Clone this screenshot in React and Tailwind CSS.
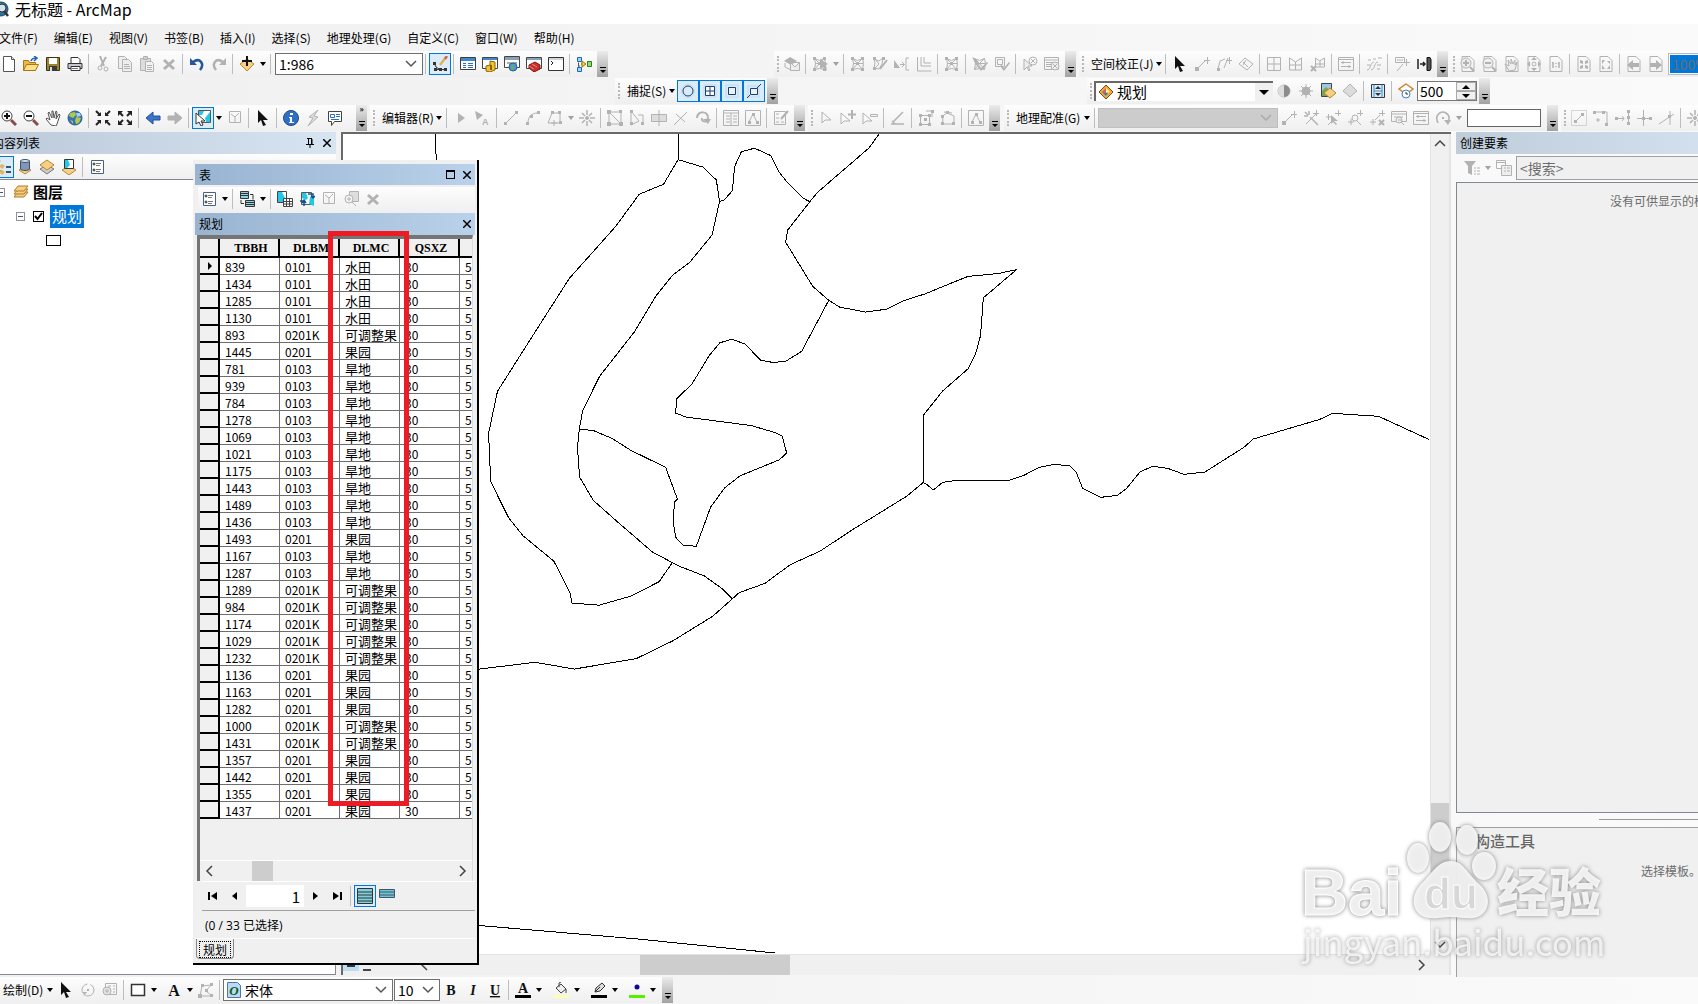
import { useState } from 'react'

const p = (d, fill = 'none', stroke = 'currentColor', w = 1) => <path d={d} fill={fill} stroke={stroke} strokeWidth={w} />
const f = (d, fill = 'currentColor') => <path d={d} fill={fill} stroke="none" />

const cursor = 'M3 0v13l3-3 2 6 3-1-3-5h5z'
const page = 'M2 .5h8l4 4v11H2z'
const mesh = 'M2.500 2.500l5 2 5-2 1 5-1 6-5-1-5 1 1-6zM2.500 2.500l5 5 5-5M7.500 7.500l-5 6M7.500 7.500l5 6M3 7.500h10'
const nodes = 'M1 1h3v3H1zM11 1h3v3h-3zM1 12h3v3H1zM11 12h3v3h-3zM6 6h3v3H6z'
const plus = 'M10 4.500h6M13.500 1v7'

const icons = {
  new: <>{p('M2.500.5h8l3 3v12h-11z', '#fff', '#555')}{p('M10.500.5v3h3', '#dde8f5', '#555')}</>,
  open: <>{p('M.5 14.500v-10h5l1 2h6v8z', '#e8b84c', '#a87718')}{p('M.5 14.500l3-6h12l-3 6z', '#ffdf8a', '#a87718')}{p('M8 5c1-3 3-3 5-3M11 0l3 2-3 3', 'none', '#2b62ad', 1.500)}</>,
  save: <>{p('M1.500 1.500h13v13h-13z', '#9a8432', '#3c3514')}{f('M4 2h8v6H4z', '#fff')}{f('M4 10h8v5H4z', '#3a3a3a')}{f('M5 11h2v4H5z', '#ddd')}</>,
  print: <>{p('M4 1.500h7l2 2v5H4z', '#fff', '#333')}{p('M1 7.500h14v5H1z', '#c5c9ce', '#333')}{p('M4 10.500h9v4H4z', '#fff', '#333')}{f('M5 12h6v1H5z', '#777')}</>,
  cut: <>{p('M5 0l4 10M11 1L6 10', 'none', 'currentColor', 2)}<circle cx="5" cy="12" r="2" /><circle cx="11" cy="13" r="2" /></>,
  copy: <>{p('M1.500.5h6l3 3v9h-9z', '#eee')}{p('M5.500 3.500h6l3 3v9h-9z', '#eee')}{p('M7 8.500h5M7 10.500h6M7 12.500h6')}</>,
  paste: <>{p('M1.500 2.500h10v12h-10z', '#ddd')}{p('M4.500.5h4v3h-4z', '#ccc')}{p('M6.500 5.500h6l2 2v8h-8z', '#f3f3f3')}{p('M8 9.500h5M8 11.500h5M8 13.500h5')}</>,
  del: p('M3 4l10 9M13 4L3 13', 'none', 'currentColor', 3),
  undo: <>{p('M4 6c7-5 12 2 7 8', 'none', '#26579b', 2.500)}{f('M1 2v7h7z', '#26579b')}</>,
  redo: <>{p('M12 6C5 1 0 8 5 14', 'none', 'currentColor', 2.500)}{f('M15 2v7H8z')}</>,
  add: <>{p('M8 3l7 5-7 7-7-7z', '#f6cf82', '#b98736')}{p('M8 0v10M3 5h10', 'none', '#111', 2)}</>,
  editor: <>{p('M3 9l1 2 3 2M3 13.500h11', 'none', '#333')}{f('M1 6h3v3H1zM2 12h3v3H2zM7 12h3v3H7zM12 12h3v3h-3z', '#333')}{p('M14 1L8 9', 'none', '#e0b35a', 2.500)}{p('M15 0l-2 3', 'none', '#c66', 2.500)}</>,
  toc: <>{p('M.5 1.500h15v12H.5z', '#fff', '#3c3c3c')}{f('M1 2h14v3H1z', '#3f87cf')}{p('M3 7.500h3M3 9.500h3M3 11.500h3M8 7.500h5M8 9.500h5M8 11.500h5', 'none', '#2c6fc0')}</>,
  catalog: <>{p('M.5 1.500h15v11H.5z', '#fff', '#444')}{f('M1 2h14v2H1z', '#3f87cf')}{p('M4 10l4-1V5l5 1v8l-5 2-4-1z', '#f1c232', '#8a6400')}{f('M8 9h2v5H8z', '#806000')}</>,
  search: <>{p('M.5.5h15v11H.5z', '#fff', '#444')}{f('M1 1h14v3H1z', '#8ba0b5')}{f('M3 6h10v2H3z', '#aaa')}<circle cx="9" cy="11" r="4" fill="#4b9bd0" stroke="#28628c" />{f('M7 10h3v3H8z', '#6ab04c')}</>,
  toolbox: <>{p('M.5 1.500h15v11H.5z', '#fff', '#444')}{f('M1 2h14v2H1z', '#8ba0b5')}{p('M3 9l6-3 5 3v4l-6 3-5-4z', '#c9302c', '#7d1512')}{p('M6 8l5 3M3 10l5 3', 'none', '#e88')}</>,
  python: <>{p('M.5 1.500h15v13H.5z', '#fff', '#333')}{f('M1 2h14v2H1z', '#cfd6de')}{p('M3 5l2 2-2 2', 'none', '#222')}</>,
  model: <>{p('M3 2v4M3 9v4M5 8h3M11 8h3', 'none', '#555')}{p('M1.500 1.500h4v4h-4zM1.500 11.500h4v4h-4z', '#9cd3ff', '#1e69b8')}{p('M2.500 6.500v4', 'none', '#555')}{p('M6 5l4 3-4 3z', '#ffd54a', '#9b7200')}{p('M11.500 5.500h4v5h-4z', '#8fdc6e', '#2f7c1d')}</>,
  zoomIn: <><circle cx="6" cy="6" r="5" fill="#fff" stroke="#444" />{p('M6 3v6M3 6h6', 'none', '#111', 2)}{p('M10 10l5 5', 'none', '#8a4b4b', 3)}</>,
  zoomOut: <><circle cx="6" cy="6" r="5" fill="#fff" stroke="#444" />{p('M3 6h6', 'none', '#111', 2)}{p('M10 10l5 5', 'none', '#8a4b4b', 3)}</>,
  pan: p('M6 15L1 9l1-1 3 2-2-7 1-1 3 6V1h1l1 7 2-7 1 1-1 7 3-5 1 1-3 9-1 2z', '#fff', '#555'),
  globe: <><circle cx="8" cy="8" r="7" fill="#3572b8" stroke="#2c5c90" />{f('M3 3l5-1 1 3-3 3-4-2zM9 7l5 1-2 5-3 1-1-3zM3 10l3 1v3z', '#b4c94b')}{f('M9 3h4l1 3-4 1z', '#a5d0f0')}</>,
  app: <><circle cx="8" cy="8" r="7" fill="#2c6f9c" stroke="#1f4a6e" />{f('M3 3l5-1 1 3-3 3-4-2z', '#58a060')}<circle cx="9" cy="7" r="4" fill="#cfe6ef" stroke="#333" />{p('M11 10l4 5', 'none', '#333', 2.500)}</>,
  fixedIn: <>{p('M1 1l4 4M15 1l-4 4M1 15l4-4M15 15l-4-4', 'none', 'currentColor', 2)}{f('M6 2v4H2zM10 2v4h4zM6 14v-4H2zM10 14v-4h4z')}</>,
  fixedOut: <>{p('M2 2l4 4M14 2l-4 4M2 14l4-4M14 14l-4-4', 'none', 'currentColor', 2)}{f('M1 1h5L1 6zM15 1h-5l5 5zM1 15h5l-5-5zM15 15h-5l5-5z')}</>,
  back: p('M1 8l7-6v4h7v4H8v4z', '#3c74c9', '#1f4f9c'),
  forward: p('M15 8L8 2v4H1v4h7v4z', 'currentColor'),
  selFeat: <>{p('M3.500.5h12v12h-12z', '#fff', '#555')}{f('M4 1h5l-2 4H4zM10 8l5-6v10h-4z', '#22c7e8')}{p('M1 3v11l3-2 2 4 2-1-2-4h4z', '#fff', '#333')}</>,
  clearSel: <>{p('M2.500 1.500h11v11h-11zM4 4l4 3 4-4M8 7v5')}</>,
  cursor: f(cursor, '#111'),
  identify: <><circle cx="8" cy="8" r="7.500" fill="#2f6fc2" stroke="#1b458a" />{f('M7 3h3v2H7zM6 7h3v5h2v1H6v-1h1V8H6z', '#fff')}</>,
  bolt: p('M13 0L4 7l4 1-5 8 10-9-4-1z', '#ddd'),
  popup: <>{p('M1.500 1.500h13v10h-7l-3 4v-4h-3z', '#fff', '#444')}{p('M3.500 4.500h4v3h-4zM9 4.500h4M9 6.500h4M4 9.500h8', 'none', '#2c6fc0')}</>,
  drawOrder: <>{p('M3 2v3l5 3M3 5v5l5 3', 'none', '#999')}{f('M0 2l3-2 3 2-3 3zM4 7l3-2 3 2-3 3zM4 13l3-2 3 2-3 3z', '#e2b55e')}{p('M11 8h5M11 13h5', 'none', '#357', 2)}</>,
  source: <>{p('M8 8l6 3-6 4-6-4z', '#f6cf82', '#b98736')}{p('M3.500 2v8c1 2 8 2 9 0V2z', '#8096b8', '#40506c')}<ellipse cx="8" cy="2" rx="4.500" ry="1.500" fill="#d8e2f0" stroke="#40506c" /></>,
  visible: <>{p('M8 6l7 4-7 5-7-5z', '#ccc', '#777')}{p('M8 1l7 5-7 5-7-5z', '#f6cf82', '#b98736')}</>,
  selection: <>{p('M8 7l7 4-7 5-7-5z', '#f6cf82', '#b98736')}{p('M3.500.5h9v9h-9z', '#fff', '#333')}{f('M4 1h3l2 5-3 3H4z', '#22c7e8')}</>,
  options: <>{p('M2.500 1.500h12v13h-12z', '#fff', '#46607f')}{p('M7 4.500h5M7 6.500h4M7 10.500h5M7 12.500h4', 'none', '#777')}<circle cx="5" cy="5" r="1" stroke="#222" /><circle cx="5" cy="11" r="1" stroke="#222" /></>,
  related: <>{p('M1.500.5h8v7h-8z', '#8bd3e0', '#333')}{p('M2 2.500h7M2 4.500h7', 'none', '#333')}{p('M6.500 9.500h9v6h-9z', '#8bd3e0', '#333')}{p('M7 11.500h8M7 13.500h8M11 3.500h3v5M5 12.500H2V9', 'none', '#333')}</>,
  selTable: <>{p('M.5.5h9v11h-9z', '#fff', '#444')}{f('M1 1h4l3 6-2 4H1z', '#22c7e8')}{p('M6.500 7.500h9v8h-9zM6 10.500h9M6 13h9M9.500 8v8M12.500 8v8', '#fff', '#444')}</>,
  switchSel: <>{p('M2.500 1.500h10v12h-10z', '#fff', '#555')}{f('M3 2h4l2 5-2 2-4-2zM11 6h4v9l-5-2z', '#22c7e8')}{p('M9 3h5v4M1 10h4v5M12 5l2 2 2-2M3 12l2-3 2 3', 'none', '#14508f', 1.500)}</>,
  zoomSel: <>{p('M6.500.5h9v10h-9z', '#ddd')}<circle cx="6" cy="8" r="4" fill="#f4f4f4" />{p('M4 8h4M6 6v4M9 11l4 4')}</>,
  layerTopo: <>{f('M0 5l6-4 7 4-6 4z')}{p('M1 7v4l6 3')}{p('M6.500 6.500h9v8h-9zM7 7l4 4 4-4', '#eee')}</>,
  meshCur: <>{p(mesh)}{f(nodes)}{f('M8 3v10l3-2 4 4-1-6 2-1z')}</>,
  mesh: <>{p(mesh)}{f(nodes)}</>,
  meshPen: <>{p('M2 3l5 2 4-3-1 6-3 5-5-1 1-5zM3 3l4 5-4 4')}{f('M1 1h3v3H1zM10 1h3v3h-3zM1 11h3v3H1z')}{p('M15 4l-7 9', 'none', 'currentColor', 2)}</>,
  extend: <>{f('M0 4l6 8H0z')}{p('M6 8.500h4M8 6l2.500 2.500L8 11M15 2h-3v12h3')}</>,
  corner: <>{p('M1.500 1v14h14M5 1v9h10', 'none', 'currentColor', 1)}{p('M8 1v6h7', 'none')}</>,
  check1: <>{p(mesh)}{f('M0 1l5 3 2 6-3-1zM5 10l4 5 7-8-1-1-6 6-2-3z')}</>,
  check2: <>{p('M1.500 1.500h9v9h-9zM3.500 3.500h5v5h-5z')}{f('M6 10l4 5 6-8-1-1-5 6-2-3z')}</>,
  errPick: <>{p('M2 3v11l3-3 2 4 1-1-2-4h4z', '#eee')}<circle cx="11" cy="5" r="4" />{p('M9 3l4 4M13 3L9 7')}</>,
  errTable: <>{p('M.5 1.500h14v12H.5zM0 4h14M2 6.500h7M2 8.500h6M2 10.500h5')}<circle cx="11" cy="10" r="4" fill="#eee" />{p('M9 8l4 4M13 8l-4 4')}</>,
  link: <>{p('M3 13l8-8')}{f('M1 11h4v4H1z')}{p(plus)}</>,
  linkCurve: <>{p('M2 13L4 5l5-2M12 2l-4 10')}{f('M1 12h3v3H1z')}{p(plus)}</>,
  rotRect: <>{p('M7 2l8 6-6 6-8-6zM5 6l5 5M8 4L5 9')}</>,
  grid4: p('M1.500 1.500h13v13h-13zM8 2v13M2 8h13'),
  gridBend: p('M1.500 2l6 4 6-4v12h-12zM7.500 6v8M2 9h12'),
  gridX: <>{p('M5.500 2l4 3 5-3v9h-9zM10 5v6M6 8h8')}{p('M1 10l5 5M6 10l-5 5', 'none', 'currentColor', 2)}</>,
  linkTable: <>{p('M.5 1.500h15v13H.5zM1 3.500h14M3 6.500h10M3 10.500h10M5 5v3M11 9v3')}</>,
  edge: p('M1 14c4 0 3-8 7-8M5 14c4 0 3-8 7-8M2 4h3M7 3h3M12 2h4M1 9h3M11 9h4M11 13h3'),
  attrXfer: <>{p('M1.500 1.500h9v5h-9zM3 4h6M3 15l6-7')}{p('M9 6.500h7M12.500 3v7')}</>,
  transfer: <>{p('M2 3v10M4 8h5M7 6l2 2-2 2', 'none', '#222', 1.500)}{p('M11 1.500h3l1 2v9l-1 2h-3z', '#555', '#111')}</>,
  pZoomIn: <>{p(page)}<circle cx="6" cy="7" r="5" fill="#eee" />{p('M3 7h6M6 4v6M10 11l4 4', 'none', 'currentColor', 2)}</>,
  pZoomOut: <>{p(page)}<circle cx="6" cy="7" r="5" fill="#eee" />{p('M3 7h6M10 11l4 4', 'none', 'currentColor', 2)}</>,
  pPan: <>{p(page)}{p('M5 15L1 8l4 2-1-6 3 4V3l2 5 2-4v5l2-3-2 8z', '#eee')}</>,
  pFull: <>{p(page)}{f('M8 1l3 3H5zM8 15l3-3H5zM1 8l3-3v6zM15 8l-3-3v6z')}<circle cx="8" cy="8" r="2" /></>,
  pOne: <>{p(page)}{p('M5 6v6M11 6v6M8 7v1M8 10v1M4 7h1M10 7h1', 'none', 'currentColor', 1.500)}</>,
  pIn: <>{p(page)}{f('M4 4l3 1v3L4 7zM12 4L9 5v3l3-1zM4 13l3-1V9l-3 1zM12 13l-3-1V9l3 1z')}</>,
  pOut: <>{p(page)}{f('M4 4h3L4 8zM12 5H9l3 3zM4 13h3l-3-4zM12 13H9l3-4z')}</>,
  pBack: <>{p(page)}{f('M1 9l6-5v3h6v4H7v3z')}</>,
  pFwd: <>{p(page)}{f('M14 9L8 4v3H2v4h6v3z')}</>,
  contrast: <><circle cx="8" cy="8" r="6" />{f('M8 2a6 6 0 0 0 0 12z', '#ddd')}{f('M8 2a6 6 0 0 1 0 12z', '#8c8c8c')}</>,
  sun: <><circle cx="8" cy="8" r="4" fill="currentColor" />{p('M8 1v14M1 8h14M3 3l10 10M13 3L3 13')}</>,
  transp: <>{p('M1.500.5h10v13h-10z', '#9cc7e6', '#444')}{f('M2 8l4-4 6 5v4H2z', '#7aa54a')}{p('M10 5l6 5-6 5-6-5z', '#f6cf82', '#b98736')}</>,
  swipe: p('M8 1l7 7-7 6-7-6z', '#dcdcdc'),
  fit: <>{p('M1.500 1.500h13v13h-13z', '#d9ecfa', '#333')}{p('M4 1.500v13M12 1.500v13M4 8h8', 'none', '#3c8ac9')}{f('M8 3l3 3H5zM8 13l3-3H5z', '#333')}</>,
  flicker: <>{p('M8 1l7 5-7 5-7-5z', '#fff', '#c88a35', 1.500)}<circle cx="8" cy="11" r="4" fill="#fff" stroke="#3b82c4" />{p('M8 9v2h2', 'none', '#333')}</>,
  tri: f('M5 3l7 5-7 5z'),
  triA: <>{f('M0 1l8 4-6 5z')}<text x="7" y="15" fontSize="9" fontWeight="bold" fill="currentColor" stroke="none" fontFamily="Liberation Sans, sans-serif">A</text></>,
  line: <>{p('M3 13L13 3')}{f('M1 12h3v3H1zM12 1h3v3h-3z')}</>,
  arc: <>{p('M3 13c0-6 3-10 10-10')}{f('M1 12h3v3H1zM12 1h3v3h-3zM5 5h3v3H5z')}</>,
  trace: <>{p('M1 13L5 3h8v10zM7 10v6M4 13h6')}{f('M12 11h3v3h-3zM11 1h3v3h-3zM4 1h3v3H4z')}</>,
  point: <>{p('M8 0v5M8 11v5M0 8h5M11 8h5M3 3l3 3M13 3l-3 3M3 13l3-3M13 13l-3-3', 'none', 'currentColor', 1.500)}<circle cx="8" cy="8" r="1.500" fill="currentColor" /></>,
  vertices: <>{p('M2 2v12h12zM14 2v12', 'none')}{p('M2 2h12', 'none')}{f('M0 0h4v4H0zM12 0h3v3h-3zM0 12h4v4H0zM12 12h4v4h-4z')}</>,
  reshape: <>{p('M2 1v14l8-4zM9 5h5v9')}{f('M1 0h3v3H1zM1 12h3v3H1zM12 12h3v3h-3z')}</>,
  cutPoly: <>{p('M.5 4.500h15v7H.5z', '#ddd')}{p('M8 0v16')}</>,
  split: <>{p('M1 15L14 2M3 4l9 8')}</>,
  rotate: <>{p('M2 8c0-8 12-7 11 0-1 5-7 4-6 0', 'none', 'currentColor', 2)}{f('M8 9h8l-3 5z')}</>,
  attrs: <>{p('M.5.5h15v15H.5zM1 3h14M8 3v12M3 6h4M3 9h4M3 12h4M10 6h4M10 9h4M10 12h4')}</>,
  sketch: <>{p('M.5.5h15v15H.5zM4 12l4-8 4 8')}{f('M3 11h3v3H3zM7 3h3v3H7zM11 11h3v3h-3z')}</>,
  create: <>{p('M1.500 1.500h11v13h-11zM3 4h3M3 8h3M3 12h3M8 12h3')}{p('M15 1L8 9', 'none', 'currentColor', 2)}</>,
  arrow: p('M4 2v11l3-3h6z', '#f8f8f8'),
  arrowPlus: <>{p('M1 3v11l3-3h6z', '#f8f8f8')}{p('M12 0v9M8 4.500h8', 'none', 'currentColor', 2)}</>,
  arrowMinus: <>{p('M1 3v11l3-3h6z', '#f8f8f8')}{p('M8.500 4.500h7v2h-7z')}</>,
  angle: p('M1 14h13M3 12l10-10M2 11l3 3', 'none', 'currentColor', 1.500),
  nodeBox: <>{p('M2.500 5.500h9v9h-9zM8 1h6v6')}{f('M1 4h3v3H1zM10 4h3v3h-3zM1 13h3v3H1zM10 13h3v3h-3zM6 8h3v3H6zM13 0h3v3h-3z')}</>,
  nodeMove: <>{p('M2.500 6L7 3l7 3v8h-11z')}{p('M4 2l8 1')}{f('M1 5h3v3H1zM6 1h3v3H6zM12 12h3v3h-3zM1 12h3v3H1z')}</>,
  linkAuto: <>{p('M2 2l3 3M6 1v4M1 6h4M7 7l8 8', 'none', 'currentColor', 1.500)}{p('M3 14L14 3M10 3.500h6M13.500 0v6')}</>,
  linkSel: <>{p('M1 7h5M3.500 4v6M10 3.500h6M13.500 0v6M3 15l4-4')}{f('M6 5v9l2-2 3 3 1-1-3-3h4z')}</>,
  linkZoom: <>{p('M1 12h6M4 9v6M10 3.500h6M13.500 0v6M10 11l4 4')}<circle cx="8" cy="8" r="3" /></>,
  linkDel: <>{p('M1 12h6M4 9v6M10 3.500h6M13.500 0v6M6 10l5-5')}{p('M10 10l5 5M15 10l-5 5', 'none', 'currentColor', 2)}</>,
  viewer: <>{p('M.5 1.500h15v10H.5zM1 4h14M3 7h9')}<circle cx="8" cy="10" r="3" fill="#eee" />{p('M10 12l3 3M7 10h3')}</>,
  rotSm: <>{p('M3 13C-1 5 6 0 11 3s3 8 1 10', 'none', 'currentColor', 1.500)}{f('M9 10h7l-3 5zM7 7h2v2H7z')}</>,
  snapBox: <><path d="M.5.5h15v15H.5z" strokeDasharray="1 1" />{p('M4 12l8-8')}{f('M3 10h3v3H3zM10 3h3v3h-3z')}</>,
  tangent: <>{p('M1 2h13v13')}{p('M3 10h4M5 8v4')}{f('M0 1h3v3H0zM12 13h3v3h-3zM9 1h3v3H9z')}</>,
  snapExt: <>{p('M1 8.500h8M7 6l2 2.500L7 11M13.500 1v14')}{f('M12 0h3v3h-3zM12 12h3v3h-3zM0 7h3v3H0zM12 6h3v3h-3z')}</>,
  snapInt: <>{p('M0 8.500h15M6.500 0v16')}{f('M5 7h3v3H5zM12 7h3v3h-3z')}</>,
  snapLine: <>{p('M0 14L15 4M11 1v14')}{f('M9 5h3v3H9z')}</>,
  filter: <>{f('M0 1h12L8 6v9l-4-2V6z')}{p('M10 8h2M10 11h2M10 14h2M13 8h3M13 11h3M13 14h3')}</>,
  organize: <>{p('M.5.5h9v8h-9zM1 2.500h8')}{p('M5.500 5.500h10v10h-10zM8 8h2M8 11h2M11 8h3M11 11h3', '#eee')}</>,
  rotDraw: <><circle cx="8" cy="8" r="6" strokeDasharray="12 3" />{f('M7 7h2v2H7zM3 10h4l-3 4z')}</>,
  boxZoom: <>{p('M3.500 1.500h11v11h-11zM6 4h3M6 7h3M11 4h2M11 7h2M11 10h2')}<circle cx="5" cy="9" r="4" fill="#e4e4e4" />{p('M3 9h4M5 7v4')}</>,
  rect: p('M1.500 2.500h13v11h-13z', '#fff', '#333', 1.500),
  editVert: <>{p('M2 14L4 4l9-1-5 6 6 5z')}{f('M0 12h4v4H0zM3 2h3v3H3zM12 1h3v3h-3zM7 7h3v3H7zM12 12h3v3h-3z')}</>,
  bucket: <>{p('M3 6l5-4 5 5-5 4z', '#eee', '#444')}{p('M6 5V1l2-1M13 7v4', 'none', '#444')}{f('M0 13h16v3H0z', '#ffffb4')}</>,
  pen: <>{p('M4 10l1-4 6-5 3 3-5 5zM4 10l5-5', '#ddd', '#333')}{f('M0 13h16v3H0z', '#000')}</>,
  marker: <><circle cx="8" cy="5" r="2.500" fill="#0a0a8c" stroke="none" />{f('M0 13h16v3H0z', '#58f000')}</>,
  fontCol: <><text x="8" y="11" textAnchor="middle" fontSize="14" fontWeight="bold" fill="#111" stroke="none" fontFamily="Liberation Serif, serif">A</text>{f('M0 13h16v3H0z', '#000')}</>,
  letterA: <text x="8" y="14" textAnchor="middle" fontSize="16" fontWeight="bold" fill="#111" stroke="none" fontFamily="Liberation Serif, serif">A</text>,
  bold: <text x="8" y="13" textAnchor="middle" fontSize="14" fontWeight="bold" fill="#111" stroke="none" fontFamily="Liberation Serif, serif">B</text>,
  italic: <text x="8" y="13" textAnchor="middle" fontSize="14" fontWeight="bold" fontStyle="italic" fill="#111" stroke="none" fontFamily="Liberation Serif, serif">I</text>,
  underline: <text x="8" y="13" textAnchor="middle" fontSize="14" fontWeight="bold" textDecoration="underline" fill="#111" stroke="none" fontFamily="Liberation Serif, serif">U</text>,
  snapPoint: <><circle cx="8" cy="8" r="6.500" stroke="#b9dcf7" /><circle cx="8" cy="8" r="5" stroke="#1c3f6e" /></>,
  snapEnd: <>{p('M2 2h12v12H2z', 'none', '#b9dcf7')}{p('M3.500 3.500h9v9h-9zM8 4v9M4 8h9', '#fff', '#1c3f6e')}</>,
  snapVertex: <>{p('M2 2h12v12H2z', 'none', '#b9dcf7')}{p('M4.500 4.500h7v7h-7z', '#e8f3fc', '#1c3f6e')}</>,
  snapEdge: <>{p('M2 3h11v11H2z', 'none', '#b9dcf7')}{p('M4.500 5.500h7v6h-7zM1 15l3-3M11 5l4-4', '#e8f3fc', '#1c3f6e')}</>,
  first: f('M3 4h2v8H3zM12 4v8L6 8z', '#000'),
  prev: f('M10 4v8L5 8z', '#000'),
  next: f('M6 4v8l5-4z', '#000'),
  last: f('M11 4h2v8h-2zM4 4v8l6-4z', '#000'),
  allRecs: p('M.5.5h15v15H.5zM1 4h14M1 7h14M1 10h14M1 13h14', '#7fd0de', '#333'),
  selRecs: p('M.5 1.500h15v8H.5zM1 4h14M1 7h14', '#6cc6d8', '#456'),
  layer: <>{p('M8 1l7 7-7 7-7-7z', '#f0a93c', '#7a4a10')}{f('M8 4l4 4-4 1z', '#fff38a')}{f('M4 8l4 4 2-3z', '#2d7bc5')}{f('M8 4L4 8l4 1z', '#e55')}</>,
  stack: <>{[9, 6, 3].map((y) => <path key={y} d={`M1 ${y + 4}l4-5h10l-4 5z`} fill="#f5cf85" stroke="#b07c26" />)}</>,
  fontPage: <>{p('M1.500.5h10l3 3v12h-13z', '#bcd9f2', '#4b78a8')}<text x="8" y="13" textAnchor="middle" fontSize="13" fontWeight="bold" fontStyle="italic" fill="#0b5c1c" stroke="none" fontFamily="Liberation Serif, serif">O</text></>,
}

function Icon({ name }) {
  return (
    <svg viewBox="0 0 16 16" className="h-4 w-4 shrink-0" fill="none" stroke="currentColor" aria-hidden="true">
      {icons[name]}
    </svg>
  )
}

// '|' separator, 'v' drop arrow, '-' prefix disabled, '*' prefix pressed
function Items({ list }) {
  return list.split(' ').map((it, i) => {
    if (it === '|') return <span key={i} className="mx-[2px] h-5 w-[2px] shrink-0 border-l border-[#bdbdbd]" />
    const off = it[0] === '-'
    const on = it[0] === '*'
    const name = off || on ? it.slice(1) : it
    if (name === 'v') return <Drop key={i} off={off} />
    return (
      <button
        key={i}
        aria-label={name}
        disabled={off}
        className={
          'flex h-[22px] w-[22px] shrink-0 items-center justify-center ' +
          (on ? 'border border-[#0078d7] bg-[#dcebf8]' : off ? 'text-[#b2b2b2]' : 'text-[#222] hover:bg-[#dcebf8]')
        }
      >
        <Icon name={name} />
      </button>
    )
  })
}

function Drop({ off }) {
  return (
    <span className="flex w-[10px] shrink-0 justify-center">
      <span className={'border-x-[3px] border-t-[4px] border-x-transparent ' + (off ? 'border-t-[#a0a0a0]' : 'border-t-black')} />
    </span>
  )
}

function Overflow({ double }) {
  return (
    <button aria-label="more" className="flex h-[26px] w-[11px] shrink-0 flex-col items-center justify-end bg-linear-to-b from-[#ececec] to-[#a2a2a2] pb-1">
      {double && <span className="mb-2 text-[8px] leading-[8px] font-bold">»</span>}
      <span className="h-px w-[6px] bg-black" />
      <span className="mt-[2px] border-x-[3px] border-t-[3px] border-x-transparent border-t-black" />
    </button>
  )
}

function Grip() {
  return <span className="ml-[3px] mr-[2px] h-4 w-[2px] shrink-0 border-l-2 border-dotted border-[#b8b8b8]" />
}

function Bar({ className = '', grip = true, over = 'ml-[2px]', double, children }) {
  return (
    <div className={'flex h-[26px] shrink-0 items-center bg-linear-to-b from-[#fdfdfd] to-[#efefef] ' + className}>
      {grip && <Grip />}
      {children}
      {over && <span className={over}><Overflow double={double} /></span>}
    </div>
  )
}

function Chevron({ dir = 'down', className = '' }) {
  const d = { down: 'M1 3l5 5 5-5', up: 'M1 8l5-5 5 5', left: 'M8 1L3 6l5 5', right: 'M4 1l5 5-5 5' }[dir]
  return (
    <svg viewBox="0 0 12 12" className={'h-3 w-3 ' + className} fill="none" stroke="currentColor" strokeWidth="1.500" aria-hidden="true">
      <path d={d} />
    </svg>
  )
}

function Combo({ label, value, className, icon, disabled, solid }) {
  return (
    <div className={'relative flex shrink-0 items-center ' + className}>
      {icon && <span className="pl-[2px]"><Icon name={icon} /></span>}
      <select aria-label={label} disabled={disabled} defaultValue={value} className="h-full min-w-0 flex-1 appearance-none bg-transparent px-[3px] focus:outline-none">
        <option>{value}</option>
      </select>
      {solid ? (
        <span className="pointer-events-none flex h-full w-[18px] items-center justify-center bg-[#f0f0f0]">
          <span className="border-x-[5px] border-t-[5px] border-x-transparent border-t-black" />
        </span>
      ) : (
        <span className={'pointer-events-none mr-[5px] ' + (disabled ? 'text-[#aaa]' : 'text-[#555]')}><Chevron /></span>
      )}
    </div>
  )
}

function Label({ text, className }) {
  return (
    <button className={'flex shrink-0 items-center whitespace-nowrap ' + className}>
      <span className="flex-1 text-left">{text}</span>
      <Drop />
    </button>
  )
}

const menus = ['文件(F)', '编辑(E)', '视图(V)', '书签(B)', '插入(I)', '选择(S)', '地理处理(G)', '自定义(C)', '窗口(W)', '帮助(H)']

const kinds = { w: ['0101', '水田'], k: ['0201K', '可调整果'], g: ['0201', '果园'], h: ['0103', '旱地'] }
const rows = (
  '839w 1434w 1285w 1130w 893k 1445g 781h 939h 784h 1278h 1069h 1021h 1175h 1443h 1489h 1436h 1493g 1167h 1287h ' +
  '1289k 984k 1174k 1029k 1232k 1136g 1163g 1282g 1000k 1431k 1357g 1442g 1355g 1437g'
).split(' ').map((s) => [s.slice(0, -1), ...kinds[s.slice(-1)], '30', '5'])

// parcel boundaries, digitised at 2.8x (west) and 3x (east)
const west = [
  '555,0 555,83 514,152 446,180 380,270 250,416 130,604 49,732 24,850 30,985 80,1086 121,1137 207,1208 253,1298 257,1325 334,1331 422,1306 502,1265 538,1213',
  '555,83 625,104 662,140 671,200 650,294 588,370 540,406 492,466 432,566 335,690 288,785 278,838 273,890 279,972 317,1037 390,1102 483,1182 556,1221 628,1249 676,1283 707,1313',
  '671,200 684,196 707,170 713,103 732,61 769,51 815,72 838,118 860,146 907,192 924,201',
  '1120,8 1090,50 945,175 924,201 862,280 856,314 932,438 977,477 1007,496 1080,510 1138,502 1187,478 1247,459 1310,433 1367,410 1452,402 1503,391 1410,470 1402,576 1388,628 1368,668 1296,731 1242,799 1242,987 1195,1026 1046,1118 952,1180 870,1217 798,1270 726,1296 707,1313 652,1362 540,1431 437,1481 264,1510 155,1491 -10,1511',
  '977,477 901,620 856,648 820,651 786,645 743,600 706,586 672,596 642,632 594,711 551,753 548,793 577,804 760,828 828,848 847,858 859,905 838,924 728,969 686,1002 646,1056 606,1166 570,1163 548,1141 541,1095 545,1042 553,1034 520,945 422,897 370,864 318,842 278,838',
]
const east = '10,278 21,284 40,300 68,277 110,271 268,271 310,257 357,232 405,223 450,228 468,245 488,295 543,322 592,316 620,295 660,246 697,229 743,235 792,253 855,246 972,172 1000,147 1200,88 1237,70 1376,79 1526,148'

function MapCanvas() {
  return (
    <svg className="absolute inset-0 h-full w-full" fill="none" stroke="#000" shapeRendering="crispEdges" aria-hidden="true">
      <path d="M92 0v10l2 20M130 791l165 14 137 14" />
      <g transform="translate(137 -4) scale(.357)">
        {west.map((pts) => <polyline key={pts} points={pts} vectorEffect="non-scaling-stroke" />)}
      </g>
      <polyline transform="translate(577 256) scale(.3333)" points={east} vectorEffect="non-scaling-stroke" />
    </svg>
  )
}

function Contents() {
  const [on, setOn] = useState(true)
  return (
    <aside className="flex w-[336px] shrink-0 flex-col overflow-hidden">
      <header className="flex h-[22px] shrink-0 items-center bg-linear-to-r from-[#bccad9] to-[#d7e4f2] pr-[5px]">
        <h2 className="-ml-2 flex-1">内容列表</h2>
        <button aria-label="pin" className="mr-2">
          <svg viewBox="0 0 10 10" className="h-[10px] w-[10px]" fill="none" stroke="#000" aria-hidden="true"><path d="M3.500 1v5M2 .5h5M1 6.500h8M5 7v3M7 1v5M6.500 1v5" /></svg>
        </button>
        <Close />
      </header>
      <div className="-ml-2 flex h-[25px] shrink-0 items-center bg-linear-to-b from-[#fdfdfd] to-[#efefef]">
        <Items list="*drawOrder source visible selection | options" />
      </div>
      <div className="mb-[2px] flex-1 border-t border-r border-b border-[#828790] bg-white">
        <div className="flex h-6 items-center gap-[4px]">
          <Toggle className="-ml-1" />
          <span className="ml-1"><Icon name="stack" /></span>
          <span className="text-[15px] font-bold">图层</span>
        </div>
        <label className="flex h-6 items-center">
          <Toggle className="ml-4" />
          <input type="checkbox" checked={on} onChange={() => setOn(!on)} className="peer sr-only" />
          <span className="ml-2 flex h-[11px] w-[11px] items-center justify-center border border-black text-black">
            {on && <svg viewBox="0 0 9 9" className="h-[9px] w-[9px]" fill="none" stroke="#000" strokeWidth="2"><path d="M1 4l2.500 3L8 1" /></svg>}
          </span>
          <span className="ml-[6px] h-[23px] bg-[#0078d7] px-[2px] text-[15px] leading-[22px] text-white">规划</span>
        </label>
        <div className="flex h-6 items-center pl-[46px]">
          <span className="h-[11px] w-[15px] border border-black" />
        </div>
      </div>
    </aside>
  )
}

function Toggle({ className }) {
  return (
    <span className={'flex h-[9px] w-[9px] shrink-0 items-center justify-center border border-[#919191] ' + className}>
      <span className="h-px w-[5px] bg-[#3a55a0]" />
    </span>
  )
}

function Close() {
  return (
    <button aria-label="close">
      <svg viewBox="0 0 8 8" className="h-2 w-2" stroke="#000" strokeWidth="1.500" aria-hidden="true"><path d="M0 0l8 8M8 0L0 8" /></svg>
    </button>
  )
}

const head = 'h-[19px] border-r-2 border-b-2 border-black bg-[#f0f0f0] py-0 pr-0 pl-1 text-center font-[Liberation_Serif,serif] text-[12px] leading-none font-bold'
const cell = 'h-[17px] border-r border-b border-[#6e6e6e] bg-white pt-px pr-0 pb-0 pl-[5px] leading-[13px] whitespace-nowrap'

function TableWindow() {
  return (
    <section className="absolute top-[160px] left-[193px] flex h-[805px] w-[286px] flex-col border-r-2 border-b-2 border-black bg-[#f0f0f0] pt-1 pr-[2px] pl-[2px]">
      <header className="flex h-[21px] shrink-0 items-center bg-linear-to-r from-[#99b4d1] to-[#b9d1ea] pr-1 pl-1">
        <h2 className="flex-1">表</h2>
        <button aria-label="maximize" className="mr-2 h-[9px] w-[9px] border border-t-2 border-black" />
        <Close />
      </header>
      <div className="flex h-[28px] shrink-0 items-center pl-[3px]">
        <div className="flex h-6 flex-1 items-center bg-linear-to-b from-[#fdfdfd] to-[#f0f0f0]">
          <Items list="options v | related v | selTable switchSel -clearSel -zoomSel -del" />
        </div>
      </div>
      <header className="flex h-[22px] shrink-0 items-center bg-linear-to-r from-[#99b4d1] to-[#b9d1ea] pr-1 pl-1">
        <h3 className="flex-1">规划</h3>
        <Close />
      </header>
      <div className="mx-[2px] flex min-h-0 flex-1 flex-col border-t-[4px] border-r border-l-[3px] border-t-[#757575] border-r-[#dcdcdc] border-l-[#757575]">
        <div className="min-h-0 flex-1 overflow-hidden">
          <table className="w-[320px] table-fixed border-separate border-spacing-0 text-[12px]">
            <colgroup>
              <col className="w-[20px]" />
              <col className="w-[60px]" />
              <col className="w-[60px]" />
              <col className="w-[60px]" />
              <col className="w-[60px]" />
              <col className="w-[60px]" />
            </colgroup>
            <thead>
              <tr>
                {['', 'TBBH', 'DLBM', 'DLMC', 'QSXZ', ''].map((h, i) => <th key={i} className={head}>{h}</th>)}
              </tr>
            </thead>
            <tbody>
              {rows.map((r, i) => (
                <tr key={r[0]}>
                  <td className="h-[17px] border-r-2 border-b-2 border-black bg-[#f0f0f0] p-0">
                    {i === 0 && <span className="ml-2 block h-0 w-0 border-y-[4px] border-l-[4px] border-y-transparent border-l-black" />}
                  </td>
                  {r.map((c, j) => <td key={j} className={cell + (j === 2 ? ' text-[13px]' : '')}>{c}</td>)}
                </tr>
              ))}
            </tbody>
          </table>
        </div>
        <div className="flex h-[21px] shrink-0 items-center border-t border-white px-[4px] text-[#444]">
          <Chevron dir="left" />
          <div className="flex h-full flex-1 pl-[36px]"><span className="w-[21px] bg-[#cdcdcd]" /></div>
          <Chevron dir="right" />
        </div>
      </div>
      <div className="ml-[7px] flex h-[30px] shrink-0 items-center border-t border-b border-t-white border-b-[#a0a0a0]">
        <Items list="first prev" />
        <input aria-label="record" defaultValue="1" className="h-[22px] w-[58px] bg-white px-1 text-right text-[15px] focus:outline-none" />
        <Items list="next last | *allRecs selRecs" />
      </div>
      <p className="h-[28px] shrink-0 border-b border-white pl-[10px] font-[Open_Sans,Noto_Sans_CJK_SC,sans-serif] leading-[30px]">(0 / 33 已选择)</p>
      <div className="flex h-[24px] shrink-0 pl-[1px]">
        <button className="h-[20px] rounded-b border border-t-0 border-[#888] px-[2px] pt-px">
          <span className="block border border-dotted border-black px-[3px] text-[12px] leading-[15px]">规划</span>
        </button>
      </div>
    </section>
  )
}

function CreateFeatures() {
  return (
    <aside className="ml-[5px] flex min-w-0 flex-1 flex-col overflow-hidden text-[#6d6d6d]">
      <h2 className="flex h-[22px] shrink-0 items-center bg-linear-to-r from-[#bfcddb] to-[#d2dfec] pl-1 text-black">创建要素</h2>
      <div className="flex h-[28px] shrink-0 items-center pl-[5px]">
        <Items list="-filter -v -organize" />
        <input aria-label="search" placeholder="<搜索>" className="ml-px h-6 w-[200px] shrink-0 border border-[#a0a0a0] bg-[#f0f0f0] px-[3px] text-[14px] placeholder:text-[#6d6d6d] focus:outline-none" />
      </div>
      <div className="flex-1 border-y border-l border-[#828790] bg-[#f0f0f0] pt-[10px] pl-[153px] whitespace-nowrap">没有可供显示的模板。</div>
      <div className="ml-[143px] h-[14px] shrink-0"><div className="mt-[6px] border-t border-[#999]" /></div>
      <div className="h-[150px] shrink-0 border-t border-l border-[#a0a0a0] bg-[#f0f0f0]">
        <h3 className="flex items-center gap-[2px] pt-[2px] text-[15px] leading-[22px] font-medium text-[#666]">
          <span className="text-[#c8c8c8]"><Icon name="create" /></span>构造工具
        </h3>
        <p className="pt-[11px] pl-[184px] whitespace-nowrap">选择模板。</p>
      </div>
    </aside>
  )
}

function Watermark() {
  return (
    <svg className="pointer-events-none absolute right-[88px] bottom-[34px] h-[150px] w-[310px] drop-shadow-[0_0_2px_#777]" fill="#fff" fillOpacity=".85" aria-hidden="true">
      <text x="1" y="95" fontSize="65" fontWeight="bold" fontFamily="Liberation Sans, sans-serif" stroke="#fff">Bai</text>
      <ellipse cx="118" cy="38" rx="11" ry="15" />
      <ellipse cx="140" cy="17" rx="11" ry="15" />
      <ellipse cx="167" cy="20" rx="11" ry="15" />
      <ellipse cx="184" cy="46" rx="12" ry="14" />
      <path d="M151 41c12 0 16 12 28 23 14 12 11 31-5 34-9 1-14-1-23-1s-13 2-22 1c-17-2-20-21-8-34 10-9 16-23 30-23z" />
      <text x="124" y="89" fontSize="44" fontWeight="bold" fontFamily="Liberation Sans, sans-serif" fill="#d4d4d4" stroke="#fff">du</text>
      <text x="197" y="92" fontSize="52" fontWeight="900" fontFamily="Noto Sans CJK SC, sans-serif">经验</text>
      <text x="3" y="136" fontSize="35" fontFamily="Noto Sans CJK SC, sans-serif" fillOpacity=".75">jingyan.baidu.com</text>
    </svg>
  )
}

export default function App() {
  return (
    <div className="relative flex h-screen flex-col overflow-hidden bg-linear-to-r from-[#f0f0f0] to-[#fafafa] font-[Noto_Sans_CJK_SC,sans-serif] text-[12px] leading-4 text-black">
      <header className="flex h-6 shrink-0 items-center bg-white pb-[6px]">
        <span className="-ml-[7px] mr-[6px]"><Icon name="app" /></span>
        <h1 className="text-[16px] leading-[18px]">无标题 - ArcMap</h1>
      </header>
      <nav className="-ml-px flex h-[27px] shrink-0 items-center gap-4">
        {menus.map((m) => <button key={m} className="whitespace-nowrap">{m}</button>)}
      </nav>

      <div className="flex h-[27px] shrink-0">
        <Bar grip={false} className="-ml-[2px]">
          <Items list="new open save print | -cut -copy -paste -del | undo -redo | add v |" />
          <Combo label="scale" value="1:986" className="ml-px h-[22px] w-[148px] border border-[#707070] bg-white text-[14px]" />
          <Items list="| *editor | toc catalog search toolbox python | model" />
        </Bar>
        <Bar className="ml-[166px]">
          <Items list="-layerTopo | -meshCur -v | -mesh -meshPen -extend -corner | -mesh | -check1 -check2 | -errPick -errTable" />
        </Bar>
        <Bar className="ml-[3px]">
          <Label text="空间校正(J)" className="ml-[5px] w-[72px]" />
          <Items list="| cursor -link -linkCurve -rotRect | -grid4 -gridBend -gridX | -linkTable | -edge | -attrXfer transfer" />
        </Bar>
        <Bar className="ml-[2px]" over="">
          <Items list="-pZoomIn -pZoomOut -pPan -pFull -pOne | -pIn -pOut | -pBack -pFwd" />
          <span className="ml-px border border-[#bbb] bg-white p-px">
            <input aria-label="zoom" defaultValue="100%" className="block h-[18px] w-[60px] bg-[#0078d7] px-[2px] text-[14px] text-[#6d6d6d]" />
          </span>
        </Bar>
      </div>

      <div className="flex h-[27px] shrink-0 pl-[615px]">
        <Bar>
          <Label text="捕捉(S)" className="ml-[5px] w-[50px]" />
          <Items list="*snapPoint *snapEnd *snapVertex *snapEdge" />
        </Bar>
        <Bar className="ml-[309px]">
          <Combo solid icon="layer" label="layer" value="规划" className="h-[20px] w-[179px] border-t-2 border-l-2 border-[#696969] bg-white text-[15px]" />
          <Items list="-contrast -sun transp -swipe | fit | flicker" />
          <span className="flex h-[20px] border border-[#777] bg-white">
            <input aria-label="interval" defaultValue="500" className="w-[38px] px-[2px] text-[14px] focus:outline-none" />
            <span className="flex w-5 flex-col bg-[#f0f0f0]">
              <button aria-label="up" className="flex flex-1 items-center justify-center border border-[#aaa]"><span className="border-x-[4px] border-b-[4px] border-x-transparent border-b-black" /></button>
              <button aria-label="down" className="flex flex-1 items-center justify-center border border-[#aaa]"><span className="border-x-[4px] border-t-[4px] border-x-transparent border-t-black" /></button>
            </span>
          </span>
        </Bar>
      </div>

      <div className="mb-px flex h-[26px] shrink-0">
        <Bar grip={false} double className="-ml-[2px]" over="ml-[10px]">
          <Items list="zoomIn zoomOut pan globe | fixedIn fixedOut | back -forward | *selFeat v -clearSel | cursor | identify -bolt popup" />
        </Bar>
        <Bar className="ml-[3px]">
          <Label text="编辑器(R)" className="ml-[5px] w-[62px]" />
          <Items list="| -tri -triA | -line -arc -trace -v -point | -vertices -reshape -cutPoly -split -rotate | -attrs -sketch | -create" />
        </Bar>
        <Bar className="ml-[3px]">
          <Items list="-arrow -arrowPlus -arrowMinus | -angle | -nodeBox -nodeMove | -sketch" />
        </Bar>
        <Bar className="ml-[4px]">
          <Label text="地理配准(G)" className="ml-[5px] w-[76px]" />
          <Items list="|" />
          <Combo disabled label="raster" value="" className="h-5 w-[180px] border border-[#bfbfbf] bg-[#cccccc]" />
          <Items list="-link -linkAuto -linkSel -linkZoom -linkDel -viewer -linkTable -rotSm -v" />
          <input aria-label="angle" className="ml-[3px] h-[18px] w-[74px] border border-[#646464] bg-white" />
          <span className="w-1" />
        </Bar>
        <Bar className="ml-[3px]" over="">
          <Items list="-snapBox -tangent -snapExt -snapInt -snapLine | -point" />
        </Bar>
      </div>

      <main className="flex min-h-0 flex-1">
        <Contents />
        <section className="mb-[2px] ml-[5px] flex w-[1110px] shrink-0 border-t-2 border-l-2 border-[#696969]">
          <div className="flex min-w-0 flex-1 flex-col">
            <div className="relative flex-1 border-r border-b border-[#e3e3e3] bg-white"><MapCanvas /></div>
            <div className="flex h-5 shrink-0 items-center bg-[#f0f0f0] text-[#444]">
              <span className="mb-1 h-4 w-4 bg-[#bcdcf4] pt-[9px]"><span className="mx-auto block h-[3px] w-2 bg-[#333]" /></span>
              <span className="ml-1 h-3 w-2 border-b-2 border-[#444]" />
              <span className="ml-[48px]"><Chevron dir="left" /></span>
              <div className="flex h-full flex-1 pl-[209px]"><span className="w-[150px] bg-[#cdcdcd]" /></div>
              <Chevron dir="right" className="mr-[4px]" />
            </div>
          </div>
          <div className="flex w-[20px] flex-col items-center border-r-2 border-[#e3e3e3] bg-[#f0f0f0] pt-1 pb-6 text-[#444]">
            <Chevron dir="up" />
            <div className="mt-auto mb-[46px] h-[90px] w-full bg-[#cdcdcd]" />
            <Chevron />
          </div>
        </section>
        <CreateFeatures />
      </main>

      <footer className="flex h-[27px] shrink-0">
        <Bar grip={false} over="ml-[4px]">
          <Label text="绘制(D)" className="ml-[3px] w-[52px]" />
          <Items list="cursor -rotDraw -boxZoom | rect v" />
          <span className="w-1" />
          <Items list="letterA v -editVert |" />
          <Combo icon="fontPage" label="font" value="宋体" className="h-[22px] w-[170px] border border-[#707070] bg-white text-[14px]" />
          <Combo label="size" value="10" className="ml-px h-[22px] w-[46px] border border-[#707070] bg-white text-[14px]" />
          <Items list="bold italic underline | fontCol" />
          <span className="mr-[6px]"><Drop /></span>
          <Items list="bucket" />
          <span className="mr-[6px]"><Drop /></span>
          <Items list="pen" />
          <span className="mr-[6px]"><Drop /></span>
          <Items list="marker" />
          <Drop />
        </Bar>
      </footer>

      <TableWindow />
      {/* highlight on the DLMC column */}
      <div className="pointer-events-none absolute top-[231px] left-[328px] h-[575px] w-[81px] border-[5px] border-[#ed1c24]" />
      <Watermark />
    </div>
  )
}
